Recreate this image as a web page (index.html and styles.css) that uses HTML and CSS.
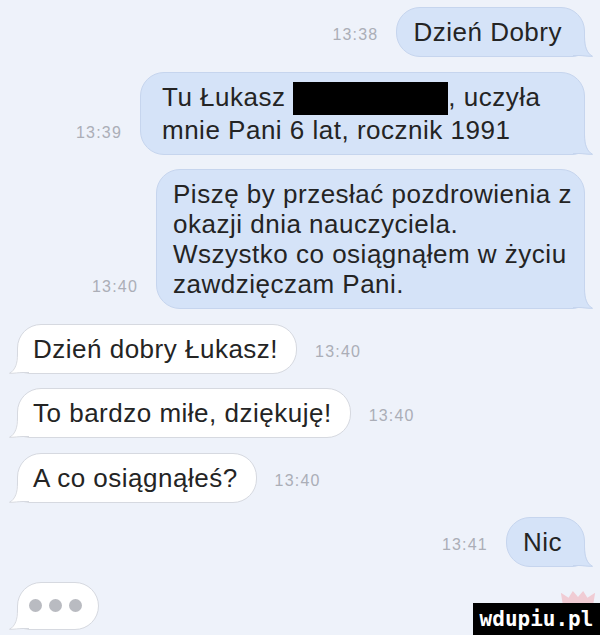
FILE: index.html
```html
<!DOCTYPE html>
<html lang="pl">
<head>
    <meta charset="UTF-8">
    <meta name="viewport" content="width=device-width, initial-scale=1.0">
    <title>Wiadomości</title>
    <link rel="stylesheet" href="styles.css">
</head>
<body>
    <section class="chat">
        <div class="msg sent">
            <span class="time">13:38</span>
            <div class="bubble">
                Dzień Dobry
                <svg class="tail" viewBox="0 0 20 20"><path class="tail-fill" d="M0,0 L12,0 C12,9 14,16 20,19.6 C15,19.8 10,19 6,19 L0,19 Z"/><path class="tail-line" d="M11.5,0 C11.5,9 13.5,16 19.5,19.3 C15,19.5 10,18.5 6,18.5 L0,18.5"/></svg>
            </div>
        </div>

        <div class="msg sent">
            <span class="time">13:39</span>
            <div class="bubble bubble-wide">
                Tu Łukasz <span class="censor"></span>, uczyła<br>
                mnie Pani 6 lat, rocznik 1991
                <svg class="tail" viewBox="0 0 20 20"><path class="tail-fill" d="M0,0 L12,0 C12,9 14,16 20,19.6 C15,19.8 10,19 6,19 L0,19 Z"/><path class="tail-line" d="M11.5,0 C11.5,9 13.5,16 19.5,19.3 C15,19.5 10,18.5 6,18.5 L0,18.5"/></svg>
            </div>
        </div>

        <div class="msg sent">
            <span class="time">13:40</span>
            <div class="bubble bubble-long">
                Piszę by przesłać pozdrowienia z<br>
                okazji dnia nauczyciela.<br>
                Wszystko co osiągnąłem w życiu<br>
                zawdzięczam Pani.
                <svg class="tail" viewBox="0 0 20 20"><path class="tail-fill" d="M0,0 L12,0 C12,9 14,16 20,19.6 C15,19.8 10,19 6,19 L0,19 Z"/><path class="tail-line" d="M11.5,0 C11.5,9 13.5,16 19.5,19.3 C15,19.5 10,18.5 6,18.5 L0,18.5"/></svg>
            </div>
        </div>

        <div class="msg received">
            <div class="bubble">
                Dzień dobry Łukasz!
                <svg class="tail" viewBox="0 0 20 20"><path class="tail-fill" d="M0,0 L12,0 C12,9 14,16 20,19.6 C15,19.8 10,19 6,19 L0,19 Z"/><path class="tail-line" d="M11.5,0 C11.5,9 13.5,16 19.5,19.3 C15,19.5 10,18.5 6,18.5 L0,18.5"/></svg>
            </div>
            <span class="time">13:40</span>
        </div>

        <div class="msg received">
            <div class="bubble">
                To bardzo miłe, dziękuję!
                <svg class="tail" viewBox="0 0 20 20"><path class="tail-fill" d="M0,0 L12,0 C12,9 14,16 20,19.6 C15,19.8 10,19 6,19 L0,19 Z"/><path class="tail-line" d="M11.5,0 C11.5,9 13.5,16 19.5,19.3 C15,19.5 10,18.5 6,18.5 L0,18.5"/></svg>
            </div>
            <span class="time">13:40</span>
        </div>

        <div class="msg received">
            <div class="bubble">
                A co osiągnąłeś?
                <svg class="tail" viewBox="0 0 20 20"><path class="tail-fill" d="M0,0 L12,0 C12,9 14,16 20,19.6 C15,19.8 10,19 6,19 L0,19 Z"/><path class="tail-line" d="M11.5,0 C11.5,9 13.5,16 19.5,19.3 C15,19.5 10,18.5 6,18.5 L0,18.5"/></svg>
            </div>
            <span class="time">13:40</span>
        </div>

        <div class="msg sent">
            <span class="time">13:41</span>
            <div class="bubble">
                Nic
                <svg class="tail" viewBox="0 0 20 20"><path class="tail-fill" d="M0,0 L12,0 C12,9 14,16 20,19.6 C15,19.8 10,19 6,19 L0,19 Z"/><path class="tail-line" d="M11.5,0 C11.5,9 13.5,16 19.5,19.3 C15,19.5 10,18.5 6,18.5 L0,18.5"/></svg>
            </div>
        </div>

        <div class="msg received">
            <div class="bubble typing">
                <span class="dot"></span>
                <span class="dot"></span>
                <span class="dot"></span>
                <svg class="tail" viewBox="0 0 20 20"><path class="tail-fill" d="M0,0 L12,0 C12,9 14,16 20,19.6 C15,19.8 10,19 6,19 L0,19 Z"/><path class="tail-line" d="M11.5,0 C11.5,9 13.5,16 19.5,19.3 C15,19.5 10,18.5 6,18.5 L0,18.5"/></svg>
            </div>
        </div>
    </section>

    <div class="watermark">
        <svg class="crown" viewBox="0 0 40 14"><path d="M2,14 L0,2 L9,8 L14,0 L20,7 L26,0 L31,8 L40,2 L38,14 Z"/></svg>
        <span class="brand">wdupiu.pl</span>
    </div>
</body>
</html>
```

FILE: styles.css
```css
* {
    box-sizing: border-box;
}

html, body {
    margin: 0;
    height: 100%;
}

body {
    background-color: #eef2fa;
    font-family: 'Liberation Sans', Arial, sans-serif;
    color: #242424;
    overflow: hidden;
    position: relative;
}

.chat {
    display: flex;
    flex-direction: column;
    gap: 14.5px;
    padding: 7px 15px 0 17px;
}

.msg {
    display: flex;
    align-items: flex-end;
    gap: 18px;
}

.msg.sent {
    justify-content: flex-end;
}

.time {
    font-size: 16px;
    line-height: 18px;
    letter-spacing: 1.2px;
    color: #abaeb7;
    margin-bottom: 13px;
}

.bubble {
    position: relative;
    font-size: 26px;
    line-height: 30px;
    letter-spacing: 0.5px;
    padding: 9px 22px 9px 16px;
    border-radius: 24px;
    border: 1px solid;
}

.sent .bubble {
    background-color: #d5e3f8;
    border-color: #c6d5ee;
    border-bottom-right-radius: 12px;
}

.sent .bubble-wide {
    width: 445px;
    padding-left: 21px;
}

.sent .bubble-long {
    padding-right: 12px;
}

.received .bubble {
    background-color: #ffffff;
    border-color: #d6d9e0;
    border-bottom-left-radius: 12px;
    padding: 9px 18px 9px 15px;
}

.tail {
    position: absolute;
    bottom: -1px;
    width: 20px;
    height: 20px;
    overflow: visible;
}

.sent .tail {
    right: -9px;
}

.received .tail {
    left: -9px;
    transform: scaleX(-1);
}

.tail-line {
    fill: none;
    stroke-width: 1;
}

.sent .tail-fill {
    fill: #d5e3f8;
}

.sent .tail-line {
    stroke: #c6d5ee;
}

.received .tail-fill {
    fill: #ffffff;
}

.received .tail-line {
    stroke: #d6d9e0;
}

.censor {
    display: inline-block;
    width: 155px;
    height: 33px;
    background-color: #000;
    vertical-align: -9px;
}

.typing {
    display: flex;
    gap: 7px;
    align-items: center;
    height: 48px;
}

.received .typing {
    padding: 0 16px 0 11px;
}

.dot {
    width: 13px;
    height: 13px;
    border-radius: 50%;
    background-color: #b9bbc1;
}

.watermark {
    position: absolute;
    right: 0;
    bottom: 0;
    display: flex;
    flex-direction: column;
    align-items: flex-end;
}

.crown {
    width: 36px;
    height: 12px;
    margin-right: 4px;
    fill: #f2bcc4;
    opacity: 0.7;
}

.brand {
    display: block;
    width: 127px;
    height: 32px;
    background-color: #000;
    color: #fff;
    font-family: 'DejaVu Sans Mono', monospace;
    font-weight: bold;
    font-size: 21px;
    line-height: 32px;
    text-align: center;
}
```
